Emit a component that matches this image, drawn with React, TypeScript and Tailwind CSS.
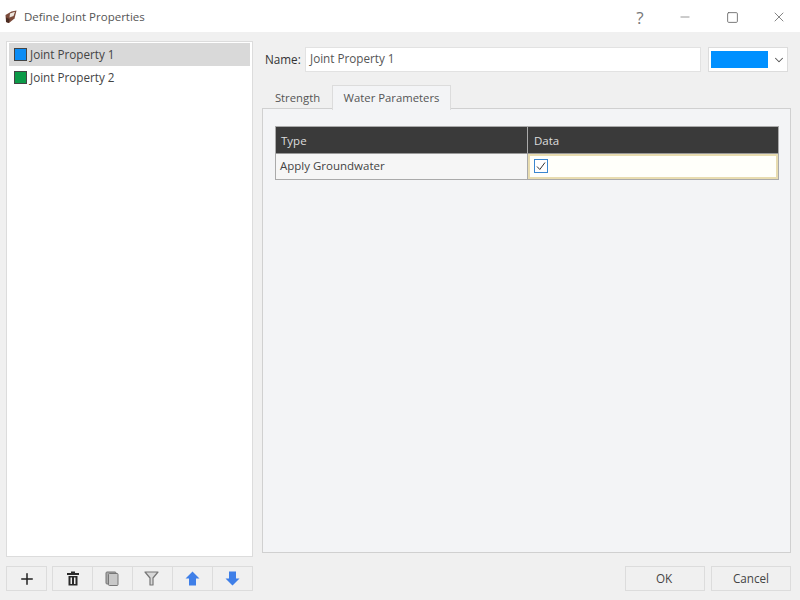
import { ChevronDown, Minus, Plus, Square, X } from "lucide-react";

const FONT = "font-['Open_Sans','Noto_Sans',sans-serif]";

function PropertyRow({ color, label, selected }: { color: string; label: string; selected?: boolean }) {
  return (
    <div className={`flex items-center gap-[2px] h-[23px] pl-[5px] text-[11.7px] text-[#444] ${selected ? "bg-[#d9d9d9]" : ""}`}>
      <span className={`w-[13px] h-[13px] border border-[#444] ${color}`} />
      <span className="pl-[1px]">{label}</span>
    </div>
  );
}

function ToolButton({ children, className }: { children: React.ReactNode; className?: string }) {
  return (
    <div className={`h-[25px] flex items-center justify-center bg-[#f0f0f0] border border-[#dcdcdc] ${className ?? ""}`}>
      {children}
    </div>
  );
}

function TitleIcon() {
  return (
    <svg width="14" height="14" viewBox="0 0 14 14">
      <path d="M1.5 5 L7.5 1.5 L12.5 0.5 L10.5 8.5 L5 13 L2 12 Z" fill="#7a4a3a" />
      <path d="M6 3.5 L11 1.8 L9.5 6 L5.5 7.5 Z" fill="#eee6de" />
      <path d="M2 12 L5 13 L5.5 9 L2 7.5 Z" fill="#4a2c22" />
    </svg>
  );
}

export default function App() {
  return (
    <div className={`w-[800px] h-[600px] flex flex-col bg-[#f0f0f0] overflow-hidden ${FONT}`}>
      {/* Title bar */}
      <div className="h-[32px] shrink-0 bg-white flex items-center pl-[4px] pt-[2px] text-[#666]">
        <TitleIcon />
        <span className="ml-[6px] text-[11.5px] text-[#555]">Define Joint Properties</span>
        <div className="ml-auto flex items-center">
          <span className="w-[46px] text-center text-[17px] leading-none text-[#777] pl-[2px]">?</span>
          <span className="w-[46px] flex justify-center"><Minus size={14} strokeWidth={1.3} color="#777" /></span>
          <span className="w-[46px] flex justify-center pl-[2px]"><Square size={13} strokeWidth={1.6} color="#666" /></span>
          <span className="w-[46px] flex justify-center pl-[4px]"><X size={16} strokeWidth={1.2} color="#666" /></span>
        </div>
      </div>

      <div className="flex-1 flex pl-[6px] pr-[9px] pt-[9px] pb-[10px] gap-[9px]">
        {/* Left column */}
        <div className="w-[247px] flex flex-col">
          <div className="h-[516px] bg-white border border-[#dcdcdc] px-[2px] pt-[1px]">
            <PropertyRow color="bg-[#0a8cf5]" label="Joint Property 1" selected />
            <PropertyRow color="bg-[#0c9a48]" label="Joint Property 2" />
          </div>
          <div className="mt-[9px] flex">
            <ToolButton className="w-[41px] mr-[5px]"><Plus size={18} strokeWidth={2} color="#222" /></ToolButton>
            <ToolButton className="w-[41px]">
              <svg width="14" height="15" viewBox="0 0 14 15">
                <path d="M5 0.5 H9 V2 H13 V4 H1 V2 H5 Z" fill="#2a2a2a" />
                <path d="M2.5 5 H11.5 V14.5 H2.5 Z M4.5 6.5 V13 H6 V6.5 Z M8 6.5 V13 H9.5 V6.5 Z" fill="#2a2a2a" fillRule="evenodd" />
              </svg>
            </ToolButton>
            <ToolButton className="w-[40px] border-l-0 pr-[2px]">
              <svg width="14" height="15" viewBox="0 0 14 15">
                <rect x="1" y="1" width="10" height="12" rx="1" fill="#aaa" stroke="#777" />
                <rect x="3.5" y="2.5" width="9.5" height="12" rx="1" fill="#c8c8c8" stroke="#777" />
              </svg>
            </ToolButton>
            <ToolButton className="w-[40px] border-l-0 pr-[2px]">
              <svg width="15" height="15" viewBox="0 0 15 15">
                <path d="M1 1 H14 L9 7 V14 H6 V7 Z" fill="#d8d8d8" stroke="#777" strokeWidth="1.2" strokeLinejoin="round" />
              </svg>
            </ToolButton>
            <ToolButton className="w-[40px] border-l-0">
              <svg width="15" height="15" viewBox="0 0 15 15">
                <path d="M7.5 0.5 L14.5 7.5 H11 V14.5 H4 V7.5 H0.5 Z" fill="#3f7fe8" />
              </svg>
            </ToolButton>
            <ToolButton className="w-[40px] border-l-0">
              <svg width="15" height="15" viewBox="0 0 15 15">
                <path d="M7.5 14.5 L14.5 7.5 H11 V0.5 H4 V7.5 H0.5 Z" fill="#3f7fe8" />
              </svg>
            </ToolButton>
          </div>
        </div>

        {/* Right column */}
        <div className="w-[529px] flex flex-col">
          <div className="flex items-center h-[25px] mt-[6px] text-[11.7px] text-[#333]">
            <span className="ml-[3px] w-[40px]">Name:</span>
            <div className="w-[396px] h-[25px] bg-white border border-[#e2e2e2] pl-[4px] pb-[2px] flex items-center text-[#555]">Joint Property 1</div>
            <div className="ml-[7px] w-[80px] h-[25px] bg-white border border-[#dcdcdc] flex items-center pl-[2px]">
              <span className="w-[57px] h-[17px] bg-[#0090ff]" />
              <ChevronDown size={14} strokeWidth={1.8} color="#555" className="ml-[4px]" />
            </div>
          </div>

          <div className="flex h-[24px] mt-[13px] pl-[3px] text-[11.3px] text-[#555] relative z-10">
            <div className="w-[67px] flex items-center justify-center pt-[3px] pr-[2px]">Strength</div>
            <div className="w-[119px] h-[25px] flex items-center justify-center pt-[1px] bg-[#f3f4f6] border border-[#dcdcdc] border-b-0">Water Parameters</div>
          </div>

          <div className="h-[445px] -mt-[1px] bg-[#f3f4f6] border border-[#d0d0d0] pt-[17px] px-[12px]">
            <div className="w-[504px] border border-[#aaa] text-[11.5px]">
              <div className="flex h-[27px] bg-[#3a3a3a] text-[#ddd] border-b border-[#999]">
                <div className="w-[252px] pl-[5px] pt-[1px] flex items-center border-r border-[#aaa]">Type</div>
                <div className="flex-1 pl-[6px] pt-[1px] flex items-center">Data</div>
              </div>
              <div className="flex h-[25px]">
                <div className="w-[252px] pl-[4px] pb-[2px] flex items-center bg-[#f6f6f6] text-[#444] border-r border-[#aaa]">Apply Groundwater</div>
                <div className="flex-1 pl-[4px] pb-[1px] flex items-center bg-[#fffffa] border-2 border-[#e8dcb0]">
                  <span className="w-[14px] h-[14px] bg-white border border-[#3a86d0] flex items-center justify-center">
                    <svg width="10" height="10" viewBox="0 0 10 10">
                      <path d="M1 5.5 L3.8 8.5 L9 1.5" fill="none" stroke="#333" strokeWidth="1" />
                    </svg>
                  </span>
                </div>
              </div>
            </div>
          </div>

          <div className="mt-[13px] flex justify-end gap-[6px] text-[11.7px] text-[#444]">
            <div className="w-[80px] h-[25px] flex items-center justify-center border border-[#dcdcdc] pr-[2px]">OK</div>
            <div className="w-[80px] h-[25px] flex items-center justify-center border border-[#dcdcdc]">Cancel</div>
          </div>
        </div>
      </div>
    </div>
  );
}
